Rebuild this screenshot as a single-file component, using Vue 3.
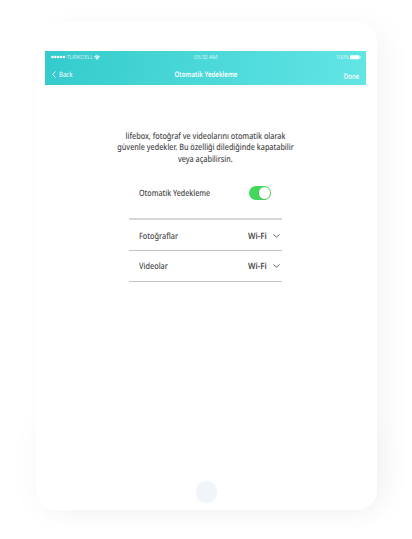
<script setup>
import { ref } from 'vue'

const enabled = ref(true)
const lines = [
  'lifebox, fotoğraf ve videolarını otomatik olarak',
  'güvenle yedekler. Bu özelliği dilediğinde kapatabilir',
  'veya açabilirsin.',
]
const rows = [
  { label: 'Fotoğraflar', value: 'Wi-Fi' },
  { label: 'Videolar', value: 'Wi-Fi' },
]
</script>

<template>
  <main class="stage">
    <section class="tablet">
      <div class="screen">
        <header class="header">
          <div class="status">
            <div class="carrier">
              <svg class="dots" viewBox="0 0 15 4">
                <circle v-for="n in 5" :key="n" :cx="n * 2.9 - 1.4" cy="2" r="1.25" fill="#fff" />
              </svg>
              <span class="name">TURKCELL</span>
              <svg class="wifi" viewBox="0 0 6 5">
                <path d="M0 1.5Q3-1 6 1.5L3 5Z" fill="#fff" opacity=".8" />
                <path d="M1 2.6Q3 1 5 2.6" fill="none" stroke="#45d3d3" stroke-width=".35" />
              </svg>
            </div>
            <span class="time">05:32 AM</span>
            <div class="power">
              <span class="percent">100%</span>
              <svg class="battery" viewBox="0 0 11 5">
                <rect x="0" y="0.3" width="9.6" height="4" rx="0.8" fill="#fff" />
                <rect x="10" y="1.4" width="0.7" height="1.8" rx="0.3" fill="#fff" />
              </svg>
            </div>
          </div>
          <nav class="nav">
            <div class="back">
              <svg class="back-icon" viewBox="0 0 4 7">
                <path d="M3.4 .5L.7 3.5L3.4 6.5" fill="none" stroke="#fff" stroke-width=".9" />
              </svg>
              <span class="back-text">Back</span>
            </div>
            <h1 class="title">Otomatik Yedekleme</h1>
            <span class="done">Done</span>
          </nav>
        </header>
        <div class="intro">
          <div v-for="l in lines" :key="l"><span>{{ l }}</span></div>
        </div>
        <div class="settings">
          <div class="master">
            <span class="master-label">Otomatik Yedekleme</span>
            <div class="toggle" :class="{ on: enabled }" @click="enabled = !enabled">
              <div class="knob"></div>
            </div>
          </div>
          <div v-for="r in rows" :key="r.label" class="row">
            <span class="row-label">{{ r.label }}</span>
            <span class="row-value">{{ r.value }}</span>
            <svg class="chevron" viewBox="0 0 7 4">
              <path d="M.5 .5L3.5 3.2L6.5 .5" fill="none" stroke="#505050" stroke-width=".9" />
            </svg>
          </div>
        </div>
      </div>
      <div class="home"></div>
    </section>
  </main>
</template>

<style>
body { background: #fff; }
</style>

<style scoped>
.stage {
  box-sizing: border-box;
  position: relative;
  isolation: isolate;
  width: 412px;
  height: 539px;
  padding: 22px 0 0 36px;
  overflow: hidden;
  font-family: "Noto Sans", "Open Sans", sans-serif;
  text-rendering: geometricPrecision;
}
.tablet {
  box-sizing: border-box;
  position: relative;
  display: flex;
  flex-direction: column;
  justify-content: space-between;
  width: 340.5px;
  height: 488px;
  padding: 29px 9px 7.5px;
  border-radius: 20px;
  background: #fff;
  box-shadow: 12px 2px 30px -4px rgba(0, 0, 0, .045);
}
.tablet::before {
  content: "";
  position: absolute;
  z-index: -1;
  inset: 400px 0 0 0;
  border-radius: 20px;
  box-shadow: 0 0 34px 1px rgba(0, 0, 0, .03);
}
.screen { width: 321px; }
.header {
  height: 34px;
  color: #fff;
  background: linear-gradient(100deg, #34cbcc, #62e5e5);
}
.status {
  display: grid;
  grid-template-columns: 1fr auto 1fr;
  align-items: center;
  height: 12px;
  padding: 0 5px 0 5.5px;
  font: 300 5.6px/12px Roboto, sans-serif;
}
.name, .time, .percent { padding-top: 2px; line-height: 10px; }
.carrier, .power { display: flex; align-items: center; }
.dots { width: 15px; height: 4px; margin-right: 1px; }
.wifi { width: 6px; height: 5px; margin-left: 1px; }
.power { justify-content: flex-end; gap: 1px; }
.battery { width: 11px; height: 5px; }
.nav {
  display: grid;
  grid-template-columns: 1fr auto 1fr;
  align-items: center;
  height: 22px;
  padding: 1px 6.5px 0;
  box-sizing: border-box;
}
.back {
  display: flex;
  align-items: center;
  gap: 3.5px;
  font-size: 7.4px;
}
.back-icon { width: 4px; height: 7px; }
.back-text { transform: scaleX(.82); transform-origin: left; }
.title {
  margin: 0;
  padding-top: 1px;
  font-size: 7.6px;
  font-weight: 600;
  transform: scaleX(.81);
}
.done {
  justify-self: end;
  padding-top: 5px;
  font-size: 7.6px;
  font-weight: 500;
  transform: scaleX(.8);
  transform-origin: right;
}
.intro {
  padding-top: 45.7px;
  color: #484848;
  font-size: 8.8px;
  font-weight: 500;
  line-height: 11.7px;
  text-align: center;
  white-space: nowrap;
}
.intro span { display: inline-block; transform: scaleX(.82); }
.settings {
  width: 153.5px;
  margin-left: 83.7px;
  padding-top: 2.4px;
  color: #484848;
  font-size: 8.7px;
  font-weight: 500;
}
.master {
  display: flex;
  align-items: center;
  justify-content: space-between;
  box-sizing: border-box;
  height: 51.9px;
  padding: 0 11px 0 10.5px;
  border-bottom: 2px solid #d6d6d6;
}
.master-label { transform: scaleX(.82); transform-origin: left; }
.toggle {
  box-sizing: border-box;
  display: flex;
  width: 22px;
  height: 13.4px;
  padding: 1px;
  border-radius: 7px;
  background: #ccc;
}
.toggle.on { justify-content: flex-end; background: #43d75b; }
.knob {
  width: 11.4px;
  height: 11.4px;
  border-radius: 50%;
  background: #fff;
  box-shadow: 0 .6px 1px rgba(0, 0, 0, .2);
}
.row {
  display: flex;
  align-items: center;
  box-sizing: border-box;
  height: 30.9px;
  padding: 1px 2.5px 0 10px;
  border-bottom: 1px solid #c4c4c4;
}
.row-label { flex: 1; transform: scaleX(.84); transform-origin: left; }
.row-value {
  margin-right: 6px;
  font-weight: 600;
  transform: scaleX(.9);
  transform-origin: right;
}
.chevron { width: 7px; height: 4px; }
.home {
  align-self: center;
  width: 21.5px;
  height: 21.5px;
  border-radius: 50%;
  background: #f1f5f9;
}
</style>
